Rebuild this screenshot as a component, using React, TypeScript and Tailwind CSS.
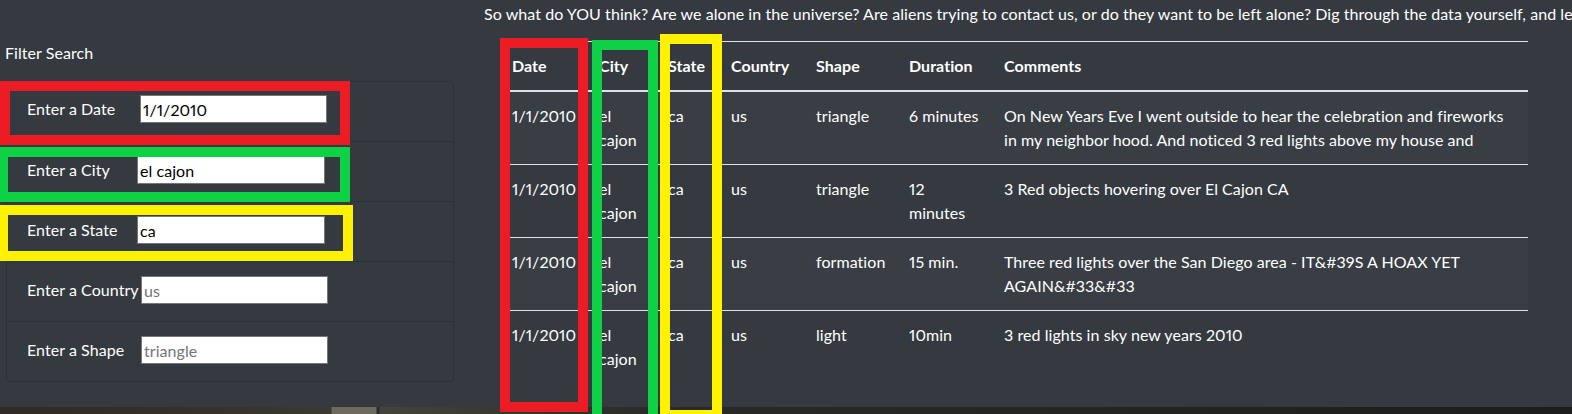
import React from "react";

type Row = {
  date: string;
  city: string[];
  state: string;
  country: string;
  shape: string;
  duration: string[];
  comments: string[];
};

const rows: Row[] = [
  {
    date: "1/1/2010",
    city: ["el", "cajon"],
    state: "ca",
    country: "us",
    shape: "triangle",
    duration: ["6 minutes"],
    comments: [
      "On New Years Eve I went outside to hear the celebration and fireworks",
      "in my neighbor hood. And noticed 3 red lights above my house and",
    ],
  },
  {
    date: "1/1/2010",
    city: ["el", "cajon"],
    state: "ca",
    country: "us",
    shape: "triangle",
    duration: ["12", "minutes"],
    comments: ["3 Red objects hovering over El Cajon CA"],
  },
  {
    date: "1/1/2010",
    city: ["el", "cajon"],
    state: "ca",
    country: "us",
    shape: "formation",
    duration: ["15 min."],
    comments: ["Three red lights over the San Diego area - IT&#39S A HOAX YET", "AGAIN&#33&#33"],
  },
  {
    date: "1/1/2010",
    city: ["el", "cajon"],
    state: "ca",
    country: "us",
    shape: "light",
    duration: ["10min"],
    comments: ["3 red lights in sky new years 2010"],
  },
];

const filters = [
  { label: "Enter a Date", labelW: "w-[113px]", inputW: "w-[187px]", value: "1/1/2010", placeholder: "" },
  { label: "Enter a City", labelW: "w-[110px]", inputW: "w-[188px]", value: "el cajon", placeholder: "" },
  { label: "Enter a State", labelW: "w-[110px]", inputW: "w-[188px]", value: "ca", placeholder: "" },
  { label: "Enter a Country", labelW: "w-[114px]", inputW: "w-[187px]", value: "", placeholder: "us" },
  { label: "Enter a Shape", labelW: "w-[114px]", inputW: "w-[187px]", value: "", placeholder: "triangle" },
];

function Lines({ lines }: { lines: string[] }) {
  return (
    <>
      {lines.map((l, i) => (
        <div key={i} className="whitespace-nowrap">
          {l}
        </div>
      ))}
    </>
  );
}

export default function App() {
  const th = "px-3 py-3 text-left align-top font-bold leading-6 border-t border-b-2 border-[#dee2e6]";
  const td = "px-3 py-3 align-top leading-6 border-t border-[#dee2e6]";
  return (
    <div className="relative h-[414px] w-full overflow-hidden bg-[#343a40] text-white font-['Lato','Noto_Sans',sans-serif] text-base tracking-[0.06px] proportional-nums">
      <div className="flex h-[407px]">
        {/* Left column */}
        <div className="w-[484px] shrink-0 pt-[41px]">
          <div className="pl-[5px] leading-6">Filter Search</div>
          <div className="ml-[6px] mt-[16px] w-[448px] rounded border border-black/[0.14]">
            {filters.map((f, i) => (
              <div
                key={f.label}
                className={
                  "flex items-start pl-5 " +
                  (i > 0 ? "h-[60px] border-t border-black/[0.14] pt-[14px]" : "h-[59px] pt-[13px]")
                }
              >
                <span className={"leading-[28px] whitespace-nowrap " + f.labelW}>{f.label}</span>
                <input
                  className={
                    "h-[28px] border border-[#767676] bg-white px-[2px] text-black text-base outline-none placeholder:text-[#757575] " +
                    f.inputW
                  }
                  defaultValue={f.value}
                  placeholder={f.placeholder}
                />
              </div>
            ))}
          </div>
        </div>

        {/* Right column */}
        <div className="min-w-0 flex-1 overflow-hidden">
          <p className="mt-[2px] whitespace-nowrap leading-6">
            So what do YOU think? Are we alone in the universe? Are aliens trying to contact us, or do they want to be
            left alone? Dig through the data yourself, and let us know what you think.
          </p>
          <table className="ml-[16px] mt-[15px] w-[1028px] table-fixed border-collapse">
            <colgroup>
              <col className="w-[87px]" />
              <col className="w-[69px]" />
              <col className="w-[63px]" />
              <col className="w-[85px]" />
              <col className="w-[93px]" />
              <col className="w-[95px]" />
              <col className="w-[536px]" />
            </colgroup>
            <thead>
              <tr>
                <th className={th}>Date</th>
                <th className={th}>City</th>
                <th className={th}>State</th>
                <th className={th}>Country</th>
                <th className={th}>Shape</th>
                <th className={th}>Duration</th>
                <th className={th}>Comments</th>
              </tr>
            </thead>
            <tbody>
              {rows.map((r, i) => (
                <tr key={i} className={i % 2 === 0 ? "bg-white/[0.025]" : ""}>
                  <td className={td}>{r.date}</td>
                  <td className={td}>
                    <Lines lines={r.city} />
                  </td>
                  <td className={td}>{r.state}</td>
                  <td className={td}>{r.country}</td>
                  <td className={td}>{r.shape}</td>
                  <td className={td}>
                    <Lines lines={r.duration} />
                  </td>
                  <td className={td}>
                    <Lines lines={r.comments} />
                  </td>
                </tr>
              ))}
            </tbody>
          </table>
        </div>
      </div>

      {/* bottom strip of background photo */}
      <div className="h-[7px] w-full bg-[linear-gradient(to_right,#2e2a25_0px,#36342c_250px,#3b3a30_331px,#6b6a5c_332px,#6b6a5c_376px,#2c2c29_377px,#2c2c29_379px,#44443a_380px,#2a2a27_650px,#1d1d1d_100%)]" />

      {/* Annotation boxes */}
      <div className="absolute left-0 top-[81px] h-[64px] w-[350px] border-[10px] border-[#ec1c24]" />
      <div className="absolute left-0 top-[147px] h-[55px] w-[350px] border-[10px] border-l-[8px] border-[#0ed145]" />
      <div className="absolute left-0 top-[205px] h-[56px] w-[353px] border-[10px] border-l-[8px] border-[#fff200]" />

      <div className="absolute left-[500px] top-[38px] h-[374px] w-[88px] border-[10px] border-[#ec1c24]" />
      <div className="absolute left-[592px] top-[40px] h-[400px] w-[66px] border-[10px] border-[#0ed145]" />
      <div className="absolute left-[660px] top-[34px] h-[386px] w-[62px] border-[10px] border-[#fff200]" />
    </div>
  );
}
